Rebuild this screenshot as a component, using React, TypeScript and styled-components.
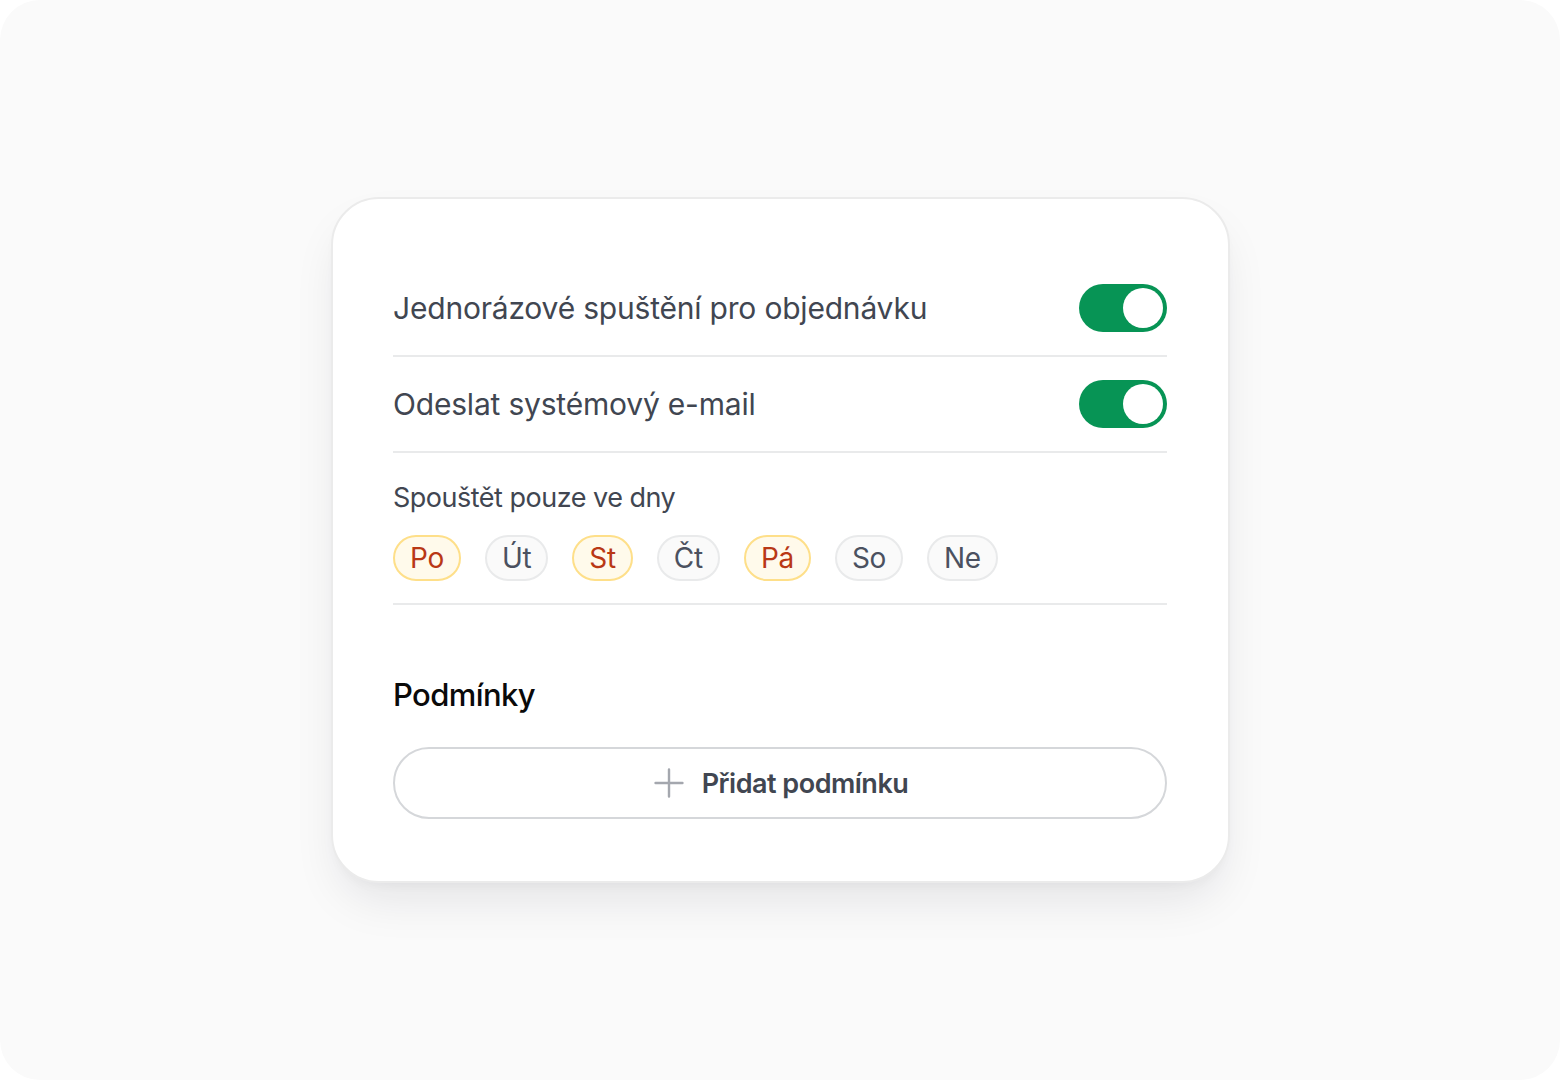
import { useState } from "react";
import styled, { createGlobalStyle } from "styled-components";

const GlobalStyle = createGlobalStyle`
  html, body {
    margin: 0;
    padding: 0;
    background: #ffffff;
  }
  body {
    font-family: Inter, "Noto Sans", "DejaVu Sans", sans-serif;
    -webkit-font-smoothing: antialiased;
  }
  * {
    box-sizing: border-box;
  }
`;

const Page = styled.div`
  width: 1560px;
  height: 1080px;
  border-radius: 40px;
  background: #fafafa;
  display: flex;
  align-items: center;
  justify-content: center;
`;

const Card = styled.div`
  width: 899px;
  padding: 62px 61px 62px 60px;
  margin-left: 1px;
  background: #ffffff;
  border: 2px solid #ebebeb;
  border-radius: 48px;
  box-shadow: 0 24px 48px -10px rgba(16, 24, 40, 0.1),
    0 6px 12px -4px rgba(16, 24, 40, 0.04);
  display: flex;
  flex-direction: column;
`;

const Row = styled.div`
  display: flex;
  align-items: center;
  justify-content: space-between;
  padding: 23px 0;
  border-bottom: 2px solid #e9eaeb;
`;

const RowLabel = styled.span`
  font-size: 30px;
  line-height: 40px;
  color: #414651;
  letter-spacing: -0.2px;
`;

const Switch = styled.button<{ $on: boolean }>`
  width: 88px;
  height: 48px;
  padding: 4px;
  border: none;
  border-radius: 999px;
  background: ${(p) => (p.$on ? "#079455" : "#e9eaeb")};
  display: flex;
  justify-content: ${(p) => (p.$on ? "flex-end" : "flex-start")};
  cursor: pointer;
`;

const Knob = styled.span`
  width: 40px;
  height: 40px;
  border-radius: 50%;
  background: #ffffff;
`;

const DaysSection = styled.div`
  display: flex;
  flex-direction: column;
  gap: 19px;
  padding: 27px 0 22px;
  border-bottom: 2px solid #e9eaeb;
`;

const SubLabel = styled.span`
  font-size: 27px;
  line-height: 36px;
  color: #414651;
  letter-spacing: -0.5px;
`;

const Chips = styled.div`
  display: flex;
  gap: 24px;
`;

const Chip = styled.button<{ $active: boolean }>`
  height: 46px;
  padding: 0 15px;
  border-radius: 999px;
  border: 2px solid ${(p) => (p.$active ? "#fedf89" : "#e9eaeb")};
  background: ${(p) => (p.$active ? "#fffaeb" : "#fafafa")};
  color: ${(p) => (p.$active ? "#b93815" : "#4b5160")};
  font-family: inherit;
  font-size: 28px;
  line-height: 1;
  letter-spacing: -0.3px;
  display: inline-flex;
  align-items: center;
  cursor: pointer;
`;

const Heading = styled.h2`
  margin: 70px 0 32px;
  font-size: 31px;
  line-height: 40px;
  font-weight: 500;
  color: #0a0a0a;
  letter-spacing: -0.6px;
`;

const AddButton = styled.button`
  height: 72px;
  width: 100%;
  border: 2px solid #d5d7da;
  border-radius: 999px;
  background: #ffffff;
  display: flex;
  align-items: center;
  justify-content: center;
  gap: 16px;
  font-family: inherit;
  font-size: 27px;
  font-weight: 600;
  color: #414651;
  letter-spacing: -0.5px;
  cursor: pointer;
`;

const PlusIcon = () => (
  <svg width="34" height="34" viewBox="0 0 24 24" fill="none">
    <path
      d="M12 2.5v19M2.5 12h19"
      stroke="#a4a7ae"
      strokeWidth="1.7"
      strokeLinecap="round"
    />
  </svg>
);

const days = [
  { label: "Po", active: true },
  { label: "Út", active: false },
  { label: "St", active: true },
  { label: "Čt", active: false },
  { label: "Pá", active: true },
  { label: "So", active: false },
  { label: "Ne", active: false },
];

export default function App() {
  const [once, setOnce] = useState(true);
  const [mail, setMail] = useState(true);
  const [selected, setSelected] = useState(days.map((d) => d.active));

  const toggleDay = (i: number) =>
    setSelected((s) => s.map((v, j) => (j === i ? !v : v)));

  return (
    <>
      <GlobalStyle />
      <Page>
        <Card>
          <Row>
            <RowLabel>Jednorázové spuštění pro objednávku</RowLabel>
            <Switch $on={once} onClick={() => setOnce(!once)}>
              <Knob />
            </Switch>
          </Row>
          <Row>
            <RowLabel>Odeslat systémový e-mail</RowLabel>
            <Switch $on={mail} onClick={() => setMail(!mail)}>
              <Knob />
            </Switch>
          </Row>
          <DaysSection>
            <SubLabel>Spouštět pouze ve dny</SubLabel>
            <Chips>
              {days.map((d, i) => (
                <Chip key={d.label} $active={selected[i]} onClick={() => toggleDay(i)}>
                  {d.label}
                </Chip>
              ))}
            </Chips>
          </DaysSection>
          <Heading>Podmínky</Heading>
          <AddButton>
            <PlusIcon />
            Přidat podmínku
          </AddButton>
        </Card>
      </Page>
    </>
  );
}
